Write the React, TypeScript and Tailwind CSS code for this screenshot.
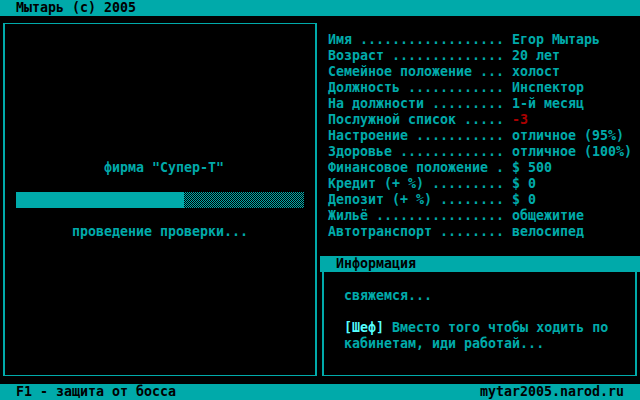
import React from "react";

// подпись добивается точками до 22 символов, как в оригинале
const row = (name: string) => (name + " ").padEnd(22, ".");

const stats: { label: string; value: string; red?: boolean }[] = [
  { label: "Имя", value: "Егор Мытарь" },
  { label: "Возраст", value: "20 лет" },
  { label: "Семейное положение", value: "холост" },
  { label: "Должность", value: "Инспектор" },
  { label: "На должности", value: "1-й месяц" },
  { label: "Послужной список", value: "-3", red: true },
  { label: "Настроение", value: "отличное (95%)" },
  { label: "Здоровье", value: "отличное (100%)" },
  { label: "Финансовое положение", value: "$ 500" },
  { label: "Кредит (+ %)", value: "$ 0" },
  { label: "Депозит (+ %)", value: "$ 0" },
  { label: "Жильё", value: "общежитие" },
  { label: "Автотранспорт", value: "велосипед" },
];

export default function App() {
  return (
    <div className="w-[640px] h-[400px] bg-black text-[#00aaaa] font-['DejaVu_Sans_Mono','Liberation_Mono',monospace] text-[13.3px] leading-4 font-bold flex flex-col overflow-hidden whitespace-pre">
      {/* верхняя строка */}
      <div className="h-4 bg-[#00aaaa] text-black pl-4">Мытарь (с) 2005</div>

      <div className="h-[368px] flex">
        {/* левая панель: проверка */}
        <div className="ml-[3px] mt-[7px] w-[314px] h-[353px] border-x-2 border-y border-[#00aaaa] flex flex-col pt-[136px]">
          <div className="h-4 pl-[99px]">фирма "Супер-Т"</div>
          <div className="h-4 mt-4 pl-[11px] flex">
            <div className="w-[168px] h-4 bg-[#00aaaa]" />
            <div className="w-[120px] h-4 bg-[repeating-conic-gradient(#00aaaa_0_25%,#000_0_50%)] bg-[length:2px_2px]" />
          </div>
          <div className="h-4 mt-4 pl-[67px]">проведение проверки...</div>
        </div>

        {/* правая часть */}
        <div className="flex-1 flex flex-col pt-4">
          <div className="pl-[11px] flex flex-col">
            {stats.map((s) => (
              <div key={s.label} className="h-4 flex">
                <span className="w-[184px]">{row(s.label)}</span>
                <span className={s.red ? "text-[#aa0000]" : ""}>{s.value}</span>
              </div>
            ))}
          </div>

          <div className="mt-4 ml-[3px] h-4 bg-[#00aaaa] text-black pl-4">Информация</div>
          <div className="ml-[5px] mr-[3px] h-[104px] border-x-2 border-b border-[#00aaaa] pt-4 pl-5">
            <div className="h-4">свяжемся...</div>
            <div className="h-4 mt-4">
              <span className="text-[#55ffff]">[Шеф]</span> Вместо того чтобы ходить по
            </div>
            <div className="h-4">кабинетам, иди работай...</div>
          </div>
        </div>
      </div>

      {/* нижняя строка */}
      <div className="h-4 bg-[#00aaaa] text-black px-4 flex justify-between">
        <span>F1 - защита от босса</span>
        <span>mytar2005.narod.ru</span>
      </div>
    </div>
  );
}
